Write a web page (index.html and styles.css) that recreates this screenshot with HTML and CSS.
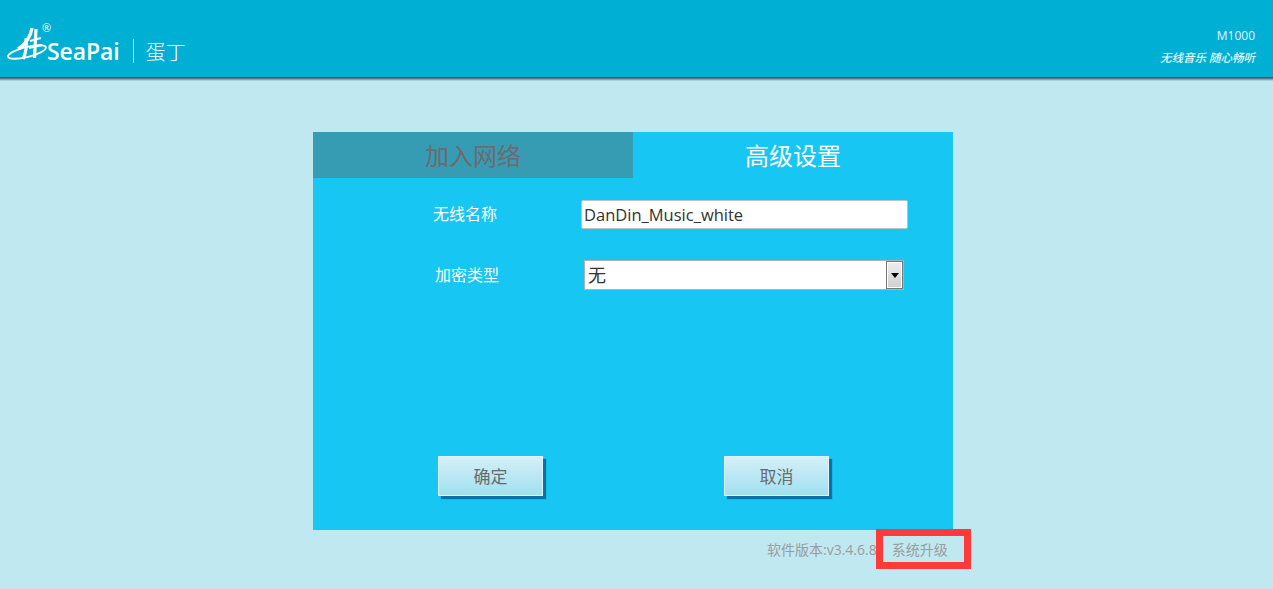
FILE: index.html
```html
<!DOCTYPE html>
<html lang="zh-CN">
<head>
    <meta charset="UTF-8">
    <meta name="viewport" content="width=device-width, initial-scale=1.0">
    <title>蛋丁</title>
    <link rel="stylesheet" href="styles.css">
</head>
<body>
    <div class="header">
        <div class="logo">
            <svg class="logo-mark" width="42" height="40" viewBox="0 0 42 40" fill="none" stroke="#fff">
                <ellipse cx="21" cy="28" rx="19.5" ry="5" transform="rotate(-14 21 28)" stroke-width="1.8"/>
                <path d="M26 4 C25 12 19 21 12 25" stroke-width="3.2"/>
                <path d="M20 14 C21 22 20 29 17 35" stroke-width="3.2"/>
                <path d="M30 5 L28.5 34" stroke-width="3.2"/>
                <path d="M24 17 L35 14 M23 24 L36 21" stroke-width="2"/>
            </svg>
            <span class="logo-reg">®</span>
            <span class="logo-name">SeaPai</span>
            <span class="logo-line"></span>
            <span class="logo-sub">蛋丁</span>
        </div>
        <div class="header-right">
            <div class="model">M1000</div>
            <div class="slogan">无线音乐 随心畅听</div>
        </div>
    </div>

    <div class="panel">
        <div class="tabs">
            <div class="tab tab-off">加入网络</div>
            <div class="tab">高级设置</div>
        </div>

        <div class="form-row row-name">
            <label class="form-label">无线名称</label>
            <input class="text-input" type="text" value="DanDin_Music_white">
        </div>

        <div class="form-row row-type">
            <label class="form-label">加密类型</label>
            <div class="select-box">
                <span class="select-value">无</span>
                <span class="select-btn"><span class="select-arrow"></span></span>
            </div>
        </div>

        <div class="buttons">
            <button class="btn" type="button">确定</button>
            <button class="btn" type="button">取消</button>
        </div>
    </div>

    <div class="footer">
        <span class="version">软件版本:v3.4.6.8</span>
        <span class="upgrade">系统升级</span>
        <div class="red-box"></div>
    </div>
</body>
</html>
```

FILE: styles.css
```css
* {
    margin: 0;
    padding: 0;
    box-sizing: border-box;
}

body {
    font-family: "Open Sans", "Noto Sans CJK SC", sans-serif;
    background: #c0e8f0;
    height: 589px;
    overflow: hidden;
}

.header {
    height: 77px;
    background: #00b0d4;
    box-shadow: 0 1px 0 #46565c, 0 2px 0 #5c767c, 0 3px 0 #86a6ae, 0 4px 0 #a8d0d8;
    display: flex;
    justify-content: space-between;
    padding: 0 18px 0 8px;
}

.logo {
    position: relative;
    display: flex;
    align-items: center;
    padding-top: 25px;
    color: #fff;
}

.logo-mark {
    position: absolute;
    left: -2px;
    top: 24px;
}

.logo-reg {
    position: absolute;
    left: 34px;
    top: 20px;
    font-size: 11px;
}

.logo-name {
    margin-left: 39px;
    font-size: 23px;
    font-weight: 600;
    letter-spacing: -0.1px;
}

.logo-line {
    width: 1px;
    height: 24px;
    margin: 0 12px 0 13px;
    background: rgba(255, 255, 255, 0.6);
}

.logo-sub {
    font-size: 20px;
    font-weight: 300;
}

.header-right {
    padding-top: 27px;
    text-align: right;
    color: #e2f4f8;
}

.model {
    font-size: 12px;
    line-height: 17px;
}

.slogan {
    margin-top: 6px;
    font-size: 11.5px;
    font-weight: 500;
    line-height: 16px;
    font-style: italic;
}

.panel {
    width: 640px;
    height: 398px;
    margin: 55px 0 0 313px;
    background: #17c6f2;
    display: flex;
    flex-direction: column;
}

.tabs {
    display: flex;
    height: 46px;
}

.tab {
    flex: 1;
    text-align: center;
    font-size: 24px;
    line-height: 47px;
    color: #fff;
}

.tab-off {
    background: #359cb4;
    color: #6f6a6c;
}

.form-row {
    display: flex;
    align-items: center;
}

.form-label {
    font-size: 16px;
    line-height: 20px;
    color: #fff;
}

.row-name {
    margin: 22px 0 0 120px;
    gap: 84px;
}

.row-name .form-label {
    padding-bottom: 2px;
}

.row-type {
    margin: 31px 0 0 122px;
    gap: 85px;
}

.text-input {
    width: 327px;
    height: 29px;
    padding: 0 2px;
    border: 1px solid #b8c4cc;
    border-radius: 2px;
    background: #fff;
    font-family: inherit;
    font-size: 16.5px;
    color: #333;
}

.select-box {
    width: 320px;
    height: 30px;
    display: flex;
    justify-content: space-between;
    border: 1px solid #a9b4b8;
    background: #fff;
}

.select-value {
    padding-left: 3px;
    font-size: 18px;
    line-height: 29px;
    color: #333;
}

.select-btn {
    width: 17px;
    display: flex;
    align-items: center;
    justify-content: center;
    border: 1px solid #777;
    box-shadow: inset 0 0 0 1px #fff;
    background: linear-gradient(180deg, #eeeeee, #cfcfcf);
}

.select-arrow {
    width: 0;
    height: 0;
    border-left: 4px solid transparent;
    border-right: 4px solid transparent;
    border-top: 5px solid #000;
}

.buttons {
    display: flex;
    gap: 181px;
    margin: 166px 0 0 125px;
}

.btn {
    width: 105px;
    height: 40px;
    padding-bottom: 2px;
    border: 1px solid #e4f6fa;
    background: linear-gradient(180deg, #d4eff7, #a0e0f0);
    box-shadow: 3px 3px 1px #0a72a4;
    font-family: inherit;
    font-size: 17px;
    color: #6a6a6a;
}

.footer {
    position: relative;
    width: 640px;
    margin-left: 313px;
    padding-top: 11px;
    display: flex;
    font-size: 14px;
    line-height: 17px;
    color: #9a9c9e;
}

.version {
    margin-left: 454px;
}

.upgrade {
    margin-left: 15px;
}

/* red mark drawn over the upgrade link */
.red-box {
    position: absolute;
    left: 563px;
    top: -1px;
    width: 95px;
    height: 40px;
    border: 7px solid #ff3a3a;
}
```
